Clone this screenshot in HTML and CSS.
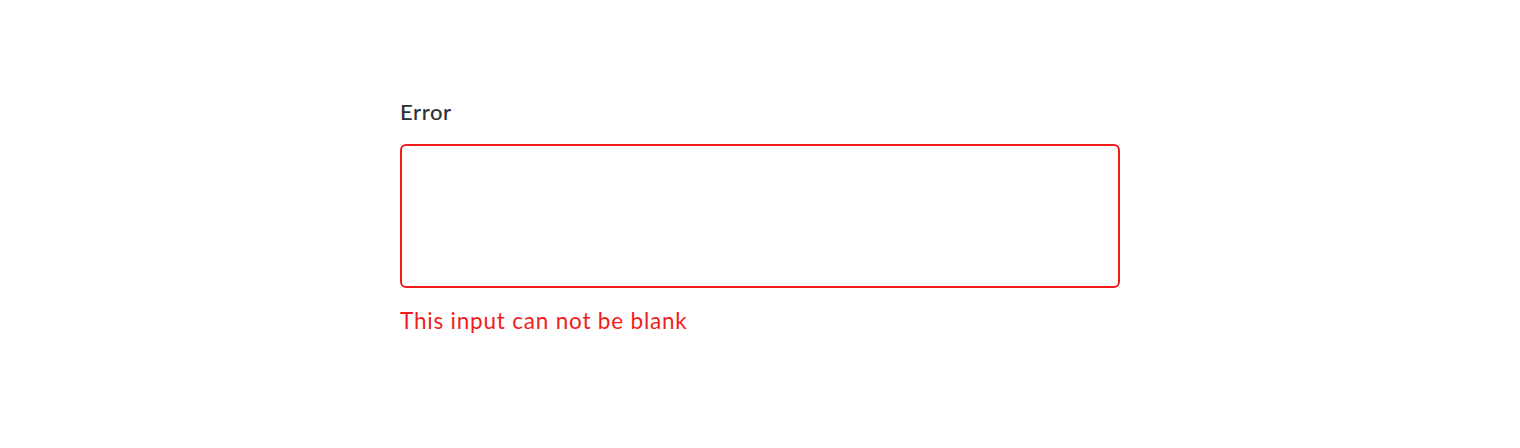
FILE: index.html
```html
<!DOCTYPE html>
<html lang="en">
<head>
<meta charset="utf-8">
<title>Error field</title>
<link rel="stylesheet" href="styles.css">
</head>
<body>
<main class="page">
  <div class="field">
    <label class="field-label" for="err">Error</label>
    <textarea id="err" class="field-input"></textarea>
    <p class="field-error">This input can not be blank</p>
  </div>
</main>
</body>
</html>
```
FILE: styles.css
```css
html, body {
  margin: 0;
  padding: 0;
  background: #ffffff;
}
.page {
  padding: 96px 0 0 400px;
  font-family: Lato, "Open Sans", Arial, sans-serif;
}
.field {
  width: 720px;
  display: flex;
  flex-direction: column;
}
.field-label {
  font-size: 22px;
  font-weight: 500;
  color: #2d3035;
  line-height: 32px;
  letter-spacing: 0.6px;
  margin-bottom: 16px;
}
.field-input {
  box-sizing: border-box;
  width: 720px;
  height: 144px;
  border: 2px solid #f21c1c;
  border-radius: 6px;
  resize: none;
  outline: none;
  margin: 0;
  padding: 12px;
  background: #fff;
}
.field-error {
  margin: 18px 0 0;
  font-size: 22.5px;
  line-height: 30px;
  letter-spacing: 0.8px;
  color: #f21c1c;
}
```
